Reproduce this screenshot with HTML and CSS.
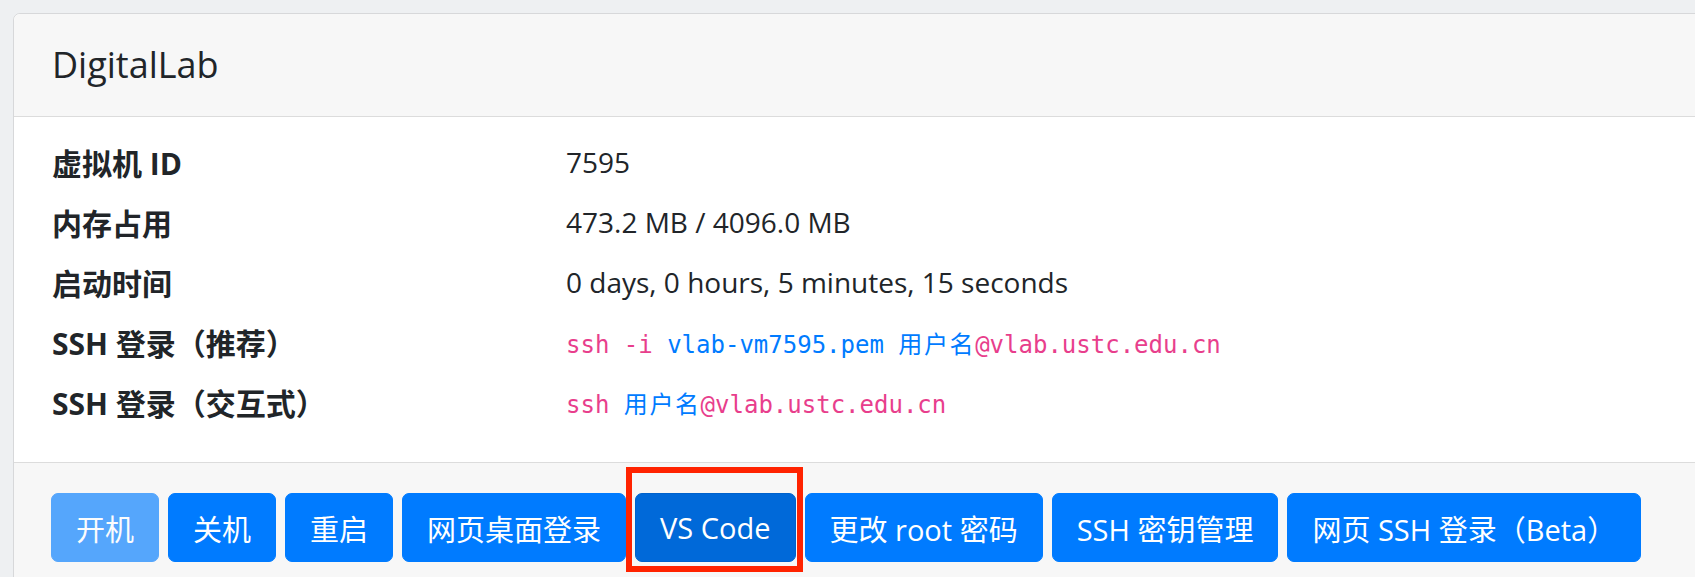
FILE: index.html
```html
<!DOCTYPE html>
<html lang="zh-CN">
<head>
<meta charset="utf-8">
<title>DigitalLab</title>
<link rel="stylesheet" href="styles.css">
</head>
<body>
<div class="card">
  <div class="card-header">
    <h5 class="card-title">DigitalLab</h5>
  </div>
  <div class="card-body">
    <dl class="info">
      <dt>虚拟机 ID</dt>
      <dd>7595</dd>
      <dt>内存占用</dt>
      <dd>473.2 MB / 4096.0 MB</dd>
      <dt>启动时间</dt>
      <dd>0 days, 0 hours, 5 minutes, 15 seconds</dd>
      <dt>SSH 登录（推荐）</dt>
      <dd><code>ssh -i <span class="ph">vlab-vm7595.pem <span class="cjk">用户名</span></span>@vlab.ustc.edu.cn</code></dd>
      <dt>SSH 登录（交互式）</dt>
      <dd><code>ssh <span class="ph cjk">用户名</span>@vlab.ustc.edu.cn</code></dd>
    </dl>
  </div>
  <div class="card-footer">
    <button class="btn disabled">开机</button>
    <button class="btn">关机</button>
    <button class="btn">重启</button>
    <button class="btn">网页桌面登录</button>
    <span class="marked">
      <button class="btn active">VS Code</button>
      <span class="highlight"></span>
    </span>
    <button class="btn">更改 root 密码</button>
    <button class="btn">SSH 密钥管理</button>
    <button class="btn">网页 SSH 登录（Beta）</button>
  </div>
</div>
</body>
</html>
```
FILE: styles.css
```css
html, body {
  overflow: hidden;
}
body {
  margin: 0;
  padding: 13px 0 0 13px;
  background: #eef0f2;
  font-family: "Open Sans", "Noto Sans CJK SC", sans-serif;
  color: #212529;
  height: 577px;
  box-sizing: border-box;
}
.card {
  width: 1800px;
  background: #fff;
  border: 1px solid #d7d8da;
  border-radius: 7px;
}
.card-header {
  height: 102px;
  background: #f7f7f7;
  border-bottom: 1px solid #dcdcdc;
  border-radius: 7px 7px 0 0;
  padding: 0 38px;
  display: flex;
  align-items: center;
}
.card-title {
  margin: 0;
  font-size: 36px;
  font-weight: 400;
  line-height: 1.2;
}
.card-body {
  padding: 15px 38px 30px;
}
.info {
  margin: 0;
  display: grid;
  grid-template-columns: 514px 1fr;
  grid-auto-rows: 60px;
  align-items: center;
  font-size: 28px;
}
.info dt {
  font-weight: 700;
  font-size: 30px;
}
.info dd {
  margin: 0;
}
code {
  font-family: "DejaVu Sans Mono", "Noto Sans CJK SC", monospace;
  font-size: 24px;
  color: #e83e8c;
}
code .ph {
  color: #007bff;
}
code .cjk {
  letter-spacing: 1.6px;
}
.card-footer {
  background: #f7f7f7;
  border-top: 1px solid #dcdcdc;
  padding: 30px 37px 40px;
  display: flex;
  gap: 9px;
  align-items: center;
}
.btn {
  font-family: "Open Sans", "Noto Sans CJK SC", sans-serif;
  font-size: 29px;
  height: 69px;
  padding: 0 24px;
  border: 1px solid #007bff;
  background: #007bff;
  color: #fff;
  border-radius: 7px;
  white-space: nowrap;
}
.btn.disabled {
  opacity: 0.65;
}
.btn.active {
  background: #0069d9;
  border-color: #0062cc;
}
.marked {
  position: relative;
  display: flex;
}
.highlight {
  position: absolute;
  left: -9px;
  right: -7px;
  top: -26px;
  bottom: -10px;
  border: 6px solid #ff2300;
}
```
